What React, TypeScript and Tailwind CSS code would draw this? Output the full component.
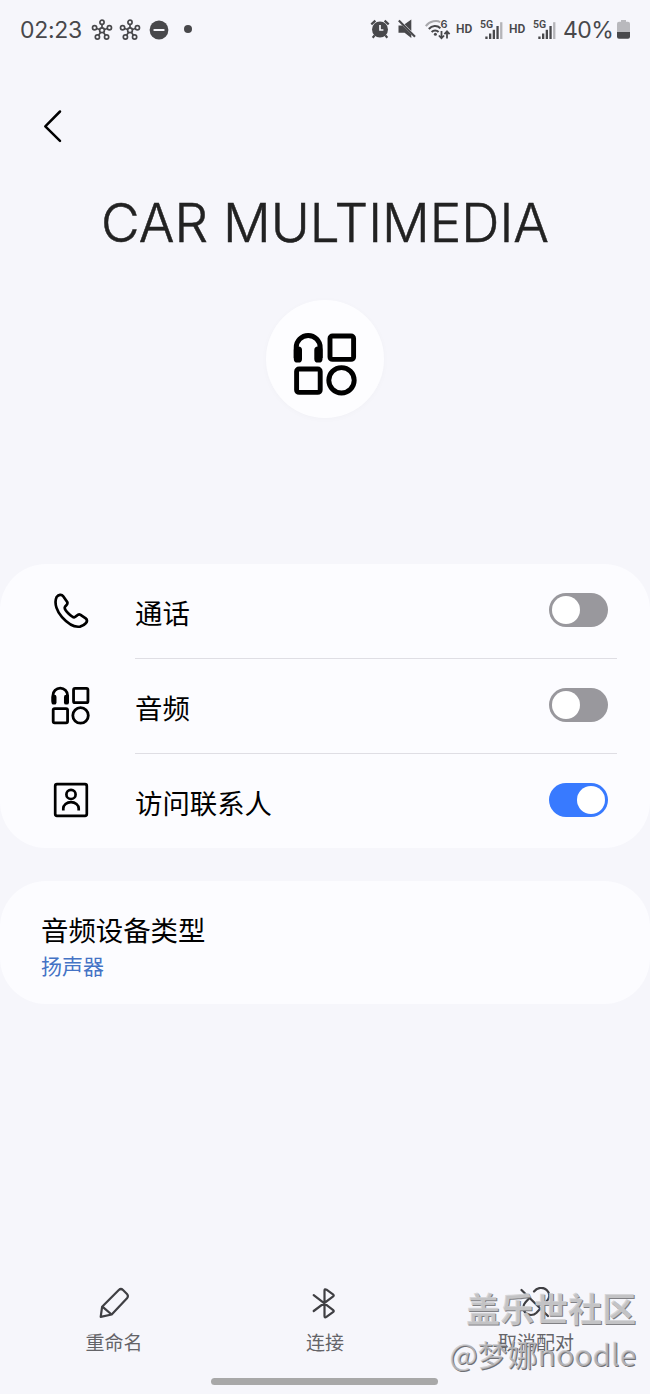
import { useState } from "react";
import type { ReactNode } from "react";
import clsx from "clsx";

function HubIcon() {
  return (
    <svg width="22" height="22" viewBox="0 0 22 22" fill="none" stroke="currentColor" strokeWidth="1.7" className="relative top-px shrink-0">
      <circle cx="11" cy="11.3" r="2.4" />
      <circle cx="11" cy="3.3" r="2.1" />
      <circle cx="3.6" cy="8.8" r="2.1" />
      <circle cx="18.4" cy="8.8" r="2.1" />
      <circle cx="6.4" cy="18" r="2.1" />
      <circle cx="15.6" cy="18" r="2.1" />
      <path d="M11 5.3v3.6M5.5 9.5l3.2 1M16.5 9.5l-3.2 1M7.6 16.3l2-3M14.4 16.3l-2-3" />
    </svg>
  );
}

function DndIcon() {
  return (
    <svg width="20" height="20" viewBox="0 0 20 20" className="relative top-px shrink-0">
      <circle cx="10" cy="10" r="9.4" fill="currentColor" />
      <path d="M5.4 10h9.2" stroke="#f6f6fb" strokeWidth="2.2" strokeLinecap="round" />
    </svg>
  );
}

function AlarmIcon() {
  return (
    <svg width="20" height="20" viewBox="0 0 20 20" fill="none" className="relative left-px shrink-0">
      <circle cx="10" cy="10.5" r="8" fill="currentColor" />
      <path d="M1.3 5.4 5.4 1.6M18.7 5.4l-4.1-3.8M4.6 16.4l-1.9 2.4M15.4 16.4l1.9 2.4" stroke="currentColor" strokeWidth="2.2" />
      <path d="M10 6v5h3.4" stroke="#f6f6fb" strokeWidth="1.7" />
    </svg>
  );
}

function MuteIcon() {
  return (
    <svg width="20" height="20" viewBox="0 0 20 20" className="relative left-px shrink-0">
      <path d="M1.5 6.5h3.8l9 9v3.5L7.6 13.7H1.5z" fill="currentColor" />
      <path d="m7.6 5.2 6.7-4.6v11.3z" fill="currentColor" />
      <path d="M1.8 1.6 18 17.8" stroke="currentColor" strokeWidth="2.1" />
    </svg>
  );
}

function WifiIcon() {
  return (
    <svg width="26" height="24" viewBox="0 -2 26 24" fill="none" stroke="currentColor" className="shrink-0">
      <path d="M.8 7.2C5 1.8 12 1 15.2 3.2" stroke="#a8a8ac" strokeWidth="2" />
      <path d="M3.8 10C7 6.4 12 6 15.4 9.2" strokeWidth="2" />
      <path d="M6.6 13c2-2 5-2.200 7 0" strokeWidth="2" />
      <circle cx="10.4" cy="15.2" r="1.5" fill="currentColor" stroke="none" />
      <path d="M16.5 12v7M13.9 16.500l2.600 2.800 2.600-2.800M22 19.500v-7M19.400 15.200l2.600-2.800 2.600 2.800" strokeWidth="1.800" />
      <text x="15.600" y="8.800" fill="currentColor" stroke="none" fontSize="11" fontWeight="600" fontFamily="Inter, sans-serif">6</text>
    </svg>
  );
}

function SignalIcon() {
  return (
    <svg width="24" height="22" viewBox="0 0 24 22" className="relative top-px shrink-0">
      <text x="0" y="8.6" fill="currentColor" fontSize="10.5" fontWeight="600" fontFamily="Roboto, sans-serif">5G</text>
      <g fill="currentColor">
        <rect x="5.3" y="17.5" width="2.3" height="2.5" />
        <rect x="9" y="14.5" width="2.3" height="5.5" />
        <rect x="12.7" y="10.8" width="2.3" height="9.2" />
        <rect x="16.4" y="7" width="2.3" height="13" />
        <rect x="20.1" y="3.2" width="2.3" height="16.8" fill="#b4b4b8" />
      </g>
    </svg>
  );
}

function BatteryIcon() {
  return (
    <svg width="13" height="19" viewBox="0 0 13 19" className="shrink-0">
      <path d="M4 0h5v1.8h2a2 2 0 0 1 2 2V12H0V3.8a2 2 0 0 1 2-2h2z" fill="#b9b9bd" />
      <path d="M0 12h13v4.8a2 2 0 0 1-2 2H2a2 2 0 0 1-2-2z" fill="currentColor" />
    </svg>
  );
}

function MediaIcon({ size, stroke = 4.9 }: { size: number; stroke?: number }) {
  return (
    <svg width={size} height={size} viewBox="0 0 64 64" fill="none" stroke="currentColor" strokeWidth={stroke}>
      <path d="M3.2 26V15.5a12 12 0 0 1 24 0V26" />
      <rect x=".8" y="14.500" width="8.200" height="16" rx="3.600" fill="currentColor" stroke="none" />
      <rect x="21.300" y="14.500" width="8.200" height="16" rx="3.600" fill="currentColor" stroke="none" />
      <rect x="37" y="4" width="23.600" height="23.400" rx="2.500" />
      <rect x="3.600" y="37" width="23.600" height="23.400" rx="2.500" />
      <circle cx="48.500" cy="48.300" r="12.700" />
    </svg>
  );
}

function PhoneIcon() {
  return (
    <svg width="36" height="36" viewBox="0 0 36 36" fill="none" stroke="currentColor" strokeWidth="2.7" strokeLinejoin="round">
      <path d="M3.6 4C5.6 1.6 8.6 1 10.2 3.2L14.2 9C15.6 11.4 12 12.6 11.7 14.6C11.5 17.4 18.8 24.4 21.2 24.3C23.6 24.2 24.4 20.4 27.2 21.7L32.7 25.4C36 28.2 31.8 32.6 27 33.6C21 34.6 13.8 29.6 9 24.2C4.4 18.8 .6 10.6 3.6 4Z" />
    </svg>
  );
}

function ContactIcon() {
  return (
    <svg width="36" height="36" viewBox="0 0 36 36" fill="none" stroke="currentColor" strokeWidth="2.7">
      <rect x="2.2" y="2.2" width="31.6" height="31.6" rx="1.8" />
      <circle cx="18" cy="12.4" r="4.6" />
      <path d="M10.3 28.5v-2a7.700 6.400 0 0 1 15.400 0v2" />
    </svg>
  );
}

function PencilIcon() {
  return (
    <svg width="32" height="32" viewBox="0 0 32 32" fill="none" stroke="currentColor" strokeWidth="2.2" strokeLinejoin="round">
      <path d="M2.7 29.8 4.1 19.8 20.8 3q2.1-2 4.2 0l4 4q1.8 2.1 0 4.2L13.7 27.500z" />
      <path d="m4.4 19.6 9.2 7.9" />
    </svg>
  );
}

function BluetoothIcon() {
  return (
    <svg width="32" height="32" viewBox="0 0 32 32" fill="none" stroke="currentColor" strokeWidth="2.2" strokeLinecap="round" strokeLinejoin="round">
      <path d="m4.7 8.2 19.500 15q1.200 1-.2 2l-6.600 4.700Q15.500 31 15.500 29V3.500q0-2 2-.8l6.500 4.600q1.400 1.100.2 2.100L4.700 24" />
    </svg>
  );
}

function UnpairIcon() {
  return (
    <svg width="32" height="32" viewBox="0 0 32 32" fill="none" stroke="currentColor" strokeWidth="2.2" strokeLinecap="round">
      <path d="M1.5 3 28 29M14 4.5C17.5.2 23-.2 26.5 2.8 29.8 6 30 10 27.3 13.5l-5 5.5M19.5 22.5l-3 3.2c-3 3-8 3-11 .2-3-3-3-7.600 0-10.700L8.500 12" />
    </svg>
  );
}

function Switch({ on, onToggle, label }: { on: boolean; onToggle: () => void; label: string }) {
  return (
    <button
      role="switch"
      aria-checked={on}
      aria-label={label}
      onClick={onToggle}
      className={clsx("mb-[2px] flex h-[34px] w-[59px] items-center rounded-full px-[3px]", on ? "justify-end bg-[#387aff]" : "justify-start bg-[#99989d]")}
    >
      <span className="size-[28px] rounded-full bg-white" />
    </button>
  );
}

interface RowProps {
  icon: ReactNode;
  label: string;
  initial?: boolean;
  last?: boolean;
}

function SettingRow({ icon, label, initial = false, last = false }: RowProps) {
  const [on, setOn] = useState(initial);
  return (
    <div className={clsx("flex pl-[50px] pr-[33px]", last ? "h-[94px]" : "h-[95px]")}>
      <div className="flex w-[41px] items-center justify-center pb-[2px]">{icon}</div>
      <div className={clsx("ml-[44px] flex flex-1 items-center justify-between pr-[9px]", !last && "border-b border-[#dfdee4]")}>
        <span className="pt-[7px] text-[27.4px] leading-none">{label}</span>
        <Switch on={on} onToggle={() => setOn(!on)} label={label} />
      </div>
    </div>
  );
}

function Action({ icon, label }: { icon: ReactNode; label: string }) {
  return (
    <button className="flex w-[211px] flex-col items-center gap-[15px] text-[#3f3f43]">
      {icon}
      <span className="text-[19px] leading-none text-[#646468]">{label}</span>
    </button>
  );
}

export default function App() {
  return (
    <div className="relative flex h-[1394px] w-[650px] flex-col overflow-hidden bg-[#f6f6fb] font-[Inter,'Noto_Sans_CJK_SC',sans-serif] text-black">
      {/* Status bar */}
      <div className="flex h-[58px] shrink-0 items-center pl-5 pr-[20px] text-[#48484b]">
        <span className="w-[71px] pt-[2px] text-[23px] tracking-[-0.3px]">02:23</span>
        <HubIcon />
        <span className="w-[6px]" />
        <HubIcon />
        <span className="w-[8px]" />
        <DndIcon />
        <span className="ml-[15px] size-[8px] rounded-full bg-current" />
        <div className="flex-1" />
        <AlarmIcon />
        <span className="w-[7px]" />
        <MuteIcon />
        <span className="w-[9px]" />
        <WifiIcon />
        <span className="ml-[5px] w-[24px] font-[Roboto] text-[12px] font-semibold">HD</span>
        <SignalIcon />
        <span className="ml-[5px] w-[24px] font-[Roboto] text-[12px] font-semibold">HD</span>
        <SignalIcon />
        <span className="ml-[6px] w-[54px] whitespace-nowrap pt-[2px] text-[23px] tracking-[-0.5px]">40%</span>
        <BatteryIcon />
      </div>

      {/* Device header */}
      <header className="flex h-[506px] shrink-0 flex-col items-center">
        <button className="mt-[51px] ml-[42px] self-start" aria-label="返回">
          <svg width="20" height="34" viewBox="0 0 20 34" fill="none" stroke="currentColor" strokeWidth="2.5" strokeLinecap="round" strokeLinejoin="round">
            <path d="M18 2.5 3.3 17.3 18 31.8" />
          </svg>
        </button>
        <h1 className="mt-[50px] whitespace-nowrap text-[53px] font-light leading-[60px] text-[#222] [-webkit-text-stroke:0.5px_#222]">CAR MULTIMEDIA</h1>
        <div className="mt-[47px] flex size-[118px] items-center justify-center rounded-full bg-[#fdfdff] pt-[9px] shadow-[0_1px_6px_rgba(0,0,0,0.025)]">
          <MediaIcon size={64} />
        </div>
      </header>

      {/* Profiles */}
      <section className="flex h-[284px] shrink-0 flex-col rounded-[46px] bg-[#fcfcff]">
        <SettingRow icon={<PhoneIcon />} label="通话" />
        <SettingRow icon={<MediaIcon size={39} stroke={4.6} />} label="音频" />
        <SettingRow icon={<ContactIcon />} label="访问联系人" initial last />
      </section>

      {/* Device type */}
      <section className="mt-[33px] flex h-[123px] shrink-0 flex-col rounded-[46px] bg-[#fcfcff] px-[41px] pt-[35px]">
        <span className="text-[27.4px] leading-[30px]">音频设备类型</span>
        <span className="mt-[9px] text-[21px] leading-[24px] text-[#4473c5]">扬声器</span>
      </section>

      <div className="flex-1" />

      {/* Bottom actions */}
      <nav className="flex shrink-0 justify-center">
        <Action icon={<PencilIcon />} label="重命名" />
        <Action icon={<BluetoothIcon />} label="连接" />
        <Action icon={<UnpairIcon />} label="取消配对" />
      </nav>
      <div className="mt-[25px] mr-px mb-[9px] h-[7px] w-[227px] shrink-0 self-center rounded-full bg-[#a8a8a8]" />

      {/* Community watermark over the bottom bar */}
      <div className="pointer-events-none absolute right-[14px] bottom-[18px] flex flex-col items-end whitespace-nowrap font-['Noto_Sans_CJK_SC',sans-serif]">
        <span className="text-[34px] font-bold leading-[44px] text-[#d0d0d2]/85 [text-shadow:1px_1px_0_#808084]">盖乐世社区</span>
        <span className="text-[30px] leading-[46px] text-[#c4c4c7]/75 [text-shadow:1px_1px_0_#707074]">@梦娜noodle</span>
      </div>
    </div>
  );
}
